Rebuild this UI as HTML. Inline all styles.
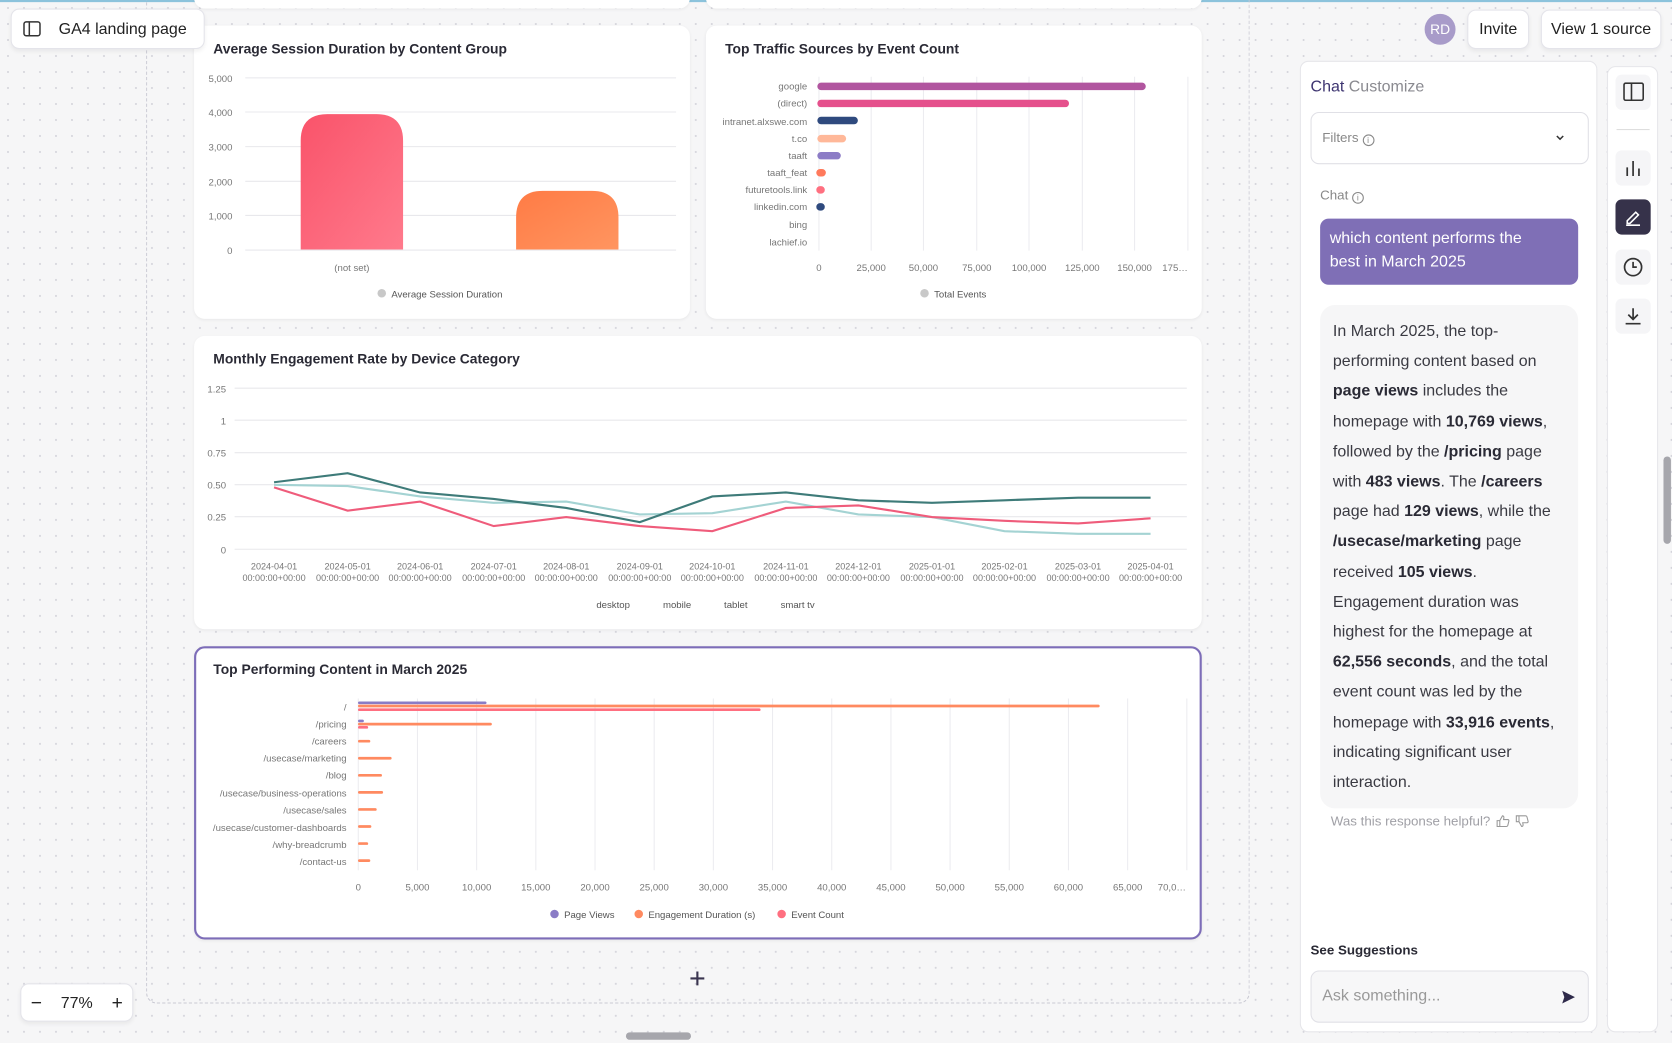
<!DOCTYPE html>
<html><head><meta charset="utf-8"><style>
*{box-sizing:border-box;margin:0;padding:0}
html,body{width:1672px;height:1043px;overflow:hidden;background:#f6f6f7;font-family:"Liberation Sans",sans-serif}
#w{position:absolute;left:0;top:0;width:1568px;height:978px;transform:scale(1.06633,1.06646);transform-origin:0 0;
background-color:#f6f6f7;background-image:radial-gradient(circle,#d3d3da 0.7px,transparent 1.1px);background-size:15px 15px;overflow:hidden}
.abs{position:absolute}
.card{position:absolute;background:#fff;border-radius:10px;box-shadow:0 1px 3px rgba(0,0,0,.06)}
.ttl{position:absolute;left:18px;top:14px;font-size:13px;font-weight:bold;color:#2a2a35}
.btn{position:absolute;background:#fff;border:1px solid #e4e4ea;border-radius:8px;box-shadow:0 2px 4px rgba(0,0,0,.06);font-size:15px;color:#222;display:flex;align-items:center;justify-content:center}
svg text{font-family:"Liberation Sans",sans-serif}
.resp b{color:#2a2a35}
</style></head><body><div id="w">
<div class="abs" style="left:0;top:0;width:1568px;height:2px;background:#8cc3dc"></div>
<div class="abs" style="left:137px;top:-10px;width:1035px;height:951px;border:1.5px dashed #c9c9d3;border-top:none;border-radius:0 0 10px 10px"></div>
<div class="card" style="left:182px;top:-20px;width:465px;height:28px"></div>
<div class="card" style="left:662px;top:-20px;width:465px;height:28px"></div>
<div class="card" style="left:182px;top:24px;width:465px;height:275px"><div class="ttl">Average Session Duration by Content Group</div></div>
<div class="card" style="left:662px;top:24px;width:465px;height:275px"><div class="ttl">Top Traffic Sources by Event Count</div></div>
<div class="card" style="left:182px;top:315px;width:945px;height:275px"><div class="ttl">Monthly Engagement Rate by Device Category</div></div>
<div class="card" style="left:182px;top:606px;width:945px;height:275px;border:2px solid #7d6db8"><div class="ttl" style="left:16px;top:12px">Top Performing Content in March 2025</div></div>

<svg class="abs" style="left:0;top:0" width="1568" height="978" font-size="9" fill="#777">
<defs>
<linearGradient id="gr" x1="0" y1="0" x2="1" y2="1"><stop offset="0" stop-color="#f9536a"/><stop offset="1" stop-color="#ff7a8c"/></linearGradient>
<linearGradient id="go" x1="0" y1="0" x2="1" y2="1"><stop offset="0" stop-color="#ff7b45"/><stop offset="1" stop-color="#ff9560"/></linearGradient>
</defs>
<g stroke="#e8e8ec" stroke-width="1">
<line x1="230" y1="73" x2="634" y2="73"/><line x1="230" y1="105" x2="634" y2="105"/><line x1="230" y1="137.5" x2="634" y2="137.5"/><line x1="230" y1="170" x2="634" y2="170"/><line x1="230" y1="202" x2="634" y2="202"/><line x1="230" y1="234.5" x2="634" y2="234.5"/></g>
<g text-anchor="end"><text x="218" y="77">5,000</text><text x="218" y="109">4,000</text><text x="218" y="141">3,000</text><text x="218" y="174">2,000</text><text x="218" y="206">1,000</text><text x="218" y="238">0</text></g>
<path d="M282 234 V132 Q282 107 307 107 H353 Q378 107 378 132 V234Z" fill="url(#gr)"/>
<path d="M484 234 V204 Q484 179 509 179 H555 Q580 179 580 204 V234Z" fill="url(#go)"/>
<text x="330" y="254" text-anchor="middle">(not set)</text>
<circle cx="358" cy="275" r="4" fill="#c8c8c8"/><text x="367" y="279" fill="#555">Average Session Duration</text>
<g stroke="#ececf0"><line x1="768" y1="72" x2="768" y2="235"/><line x1="817" y1="72" x2="817" y2="235"/><line x1="866" y1="72" x2="866" y2="235"/><line x1="916" y1="72" x2="916" y2="235"/><line x1="965" y1="72" x2="965" y2="235"/><line x1="1015" y1="72" x2="1015" y2="235"/><line x1="1064" y1="72" x2="1064" y2="235"/><line x1="1114" y1="72" x2="1114" y2="235"/></g>
<g text-anchor="end"><text x="757" y="84">google</text><text x="757" y="100">(direct)</text><text x="757" y="117">intranet.alxswe.com</text><text x="757" y="133">t.co</text><text x="757" y="149">taaft</text><text x="757" y="165">taaft_feat</text><text x="757" y="181">futuretools.link</text><text x="757" y="197">linkedin.com</text><text x="757" y="214">bing</text><text x="757" y="230">lachief.io</text></g>
<g stroke-linecap="round" stroke-width="7">
<line x1="770" y1="81" x2="1071" y2="81" stroke="#b1559f"/><line x1="770" y1="97" x2="999" y2="97" stroke="#e5508c"/><line x1="770" y1="113" x2="801" y2="113" stroke="#2f4a7e"/><line x1="770" y1="130" x2="790" y2="130" stroke="#ffb899"/><line x1="770" y1="146" x2="785" y2="146" stroke="#8c7cc6"/><line x1="769" y1="162" x2="771" y2="162" stroke="#ff7a5c"/><line x1="769" y1="178" x2="770" y2="178" stroke="#ff7080"/><line x1="769" y1="194" x2="770" y2="194" stroke="#2f4a7e"/></g>
<g text-anchor="middle"><text x="768" y="254">0</text><text x="817" y="254">25,000</text><text x="866" y="254">50,000</text><text x="916" y="254">75,000</text><text x="965" y="254">100,000</text><text x="1015" y="254">125,000</text><text x="1064" y="254">150,000</text><text x="1102" y="254">175…</text></g>
<circle cx="867" cy="275" r="4" fill="#c8c8c8"/><text x="876" y="279" fill="#555">Total Events</text>
<g stroke="#e8e8ec"><line x1="220" y1="364" x2="1113" y2="364"/><line x1="220" y1="394" x2="1113" y2="394"/><line x1="220" y1="424.5" x2="1113" y2="424.5"/><line x1="220" y1="454.5" x2="1113" y2="454.5"/><line x1="220" y1="484.5" x2="1113" y2="484.5"/><line x1="220" y1="515" x2="1113" y2="515"/></g>
<g text-anchor="end"><text x="212" y="368">1.25</text><text x="212" y="398">1</text><text x="212" y="428">0.75</text><text x="212" y="458">0.50</text><text x="212" y="488">0.25</text><text x="212" y="519">0</text></g>
<g fill="none" stroke-width="2">
<polyline stroke="#a4d3d3" points="257,454.6 326,455.8 394,465.5 463,471.5 531,470.3 600,482.4 668,481.2 737,470.3 805,482.4 874,484.8 942,498.1 1011,500.5 1079,500.5"/>
<polyline stroke="#ef5c7b" points="257,457 326,478.8 394,470.3 463,493.3 531,484.8 600,493.3 668,498.1 737,476.3 805,473.9 874,484.8 942,488.4 1011,490.8 1079,486"/>
<polyline stroke="#3e7b79" points="257,452.2 326,443.7 394,461.8 463,467.9 531,476.3 600,489.6 668,465.5 737,461.8 805,469.1 874,471.5 942,469.1 1011,466.7 1079,466.7"/>
</g>
<g text-anchor="middle" font-size="8.5">
<text x="257" y="534">2024-04-01</text><text x="257" y="545">00:00:00+00:00</text>
<text x="326" y="534">2024-05-01</text><text x="326" y="545">00:00:00+00:00</text>
<text x="394" y="534">2024-06-01</text><text x="394" y="545">00:00:00+00:00</text>
<text x="463" y="534">2024-07-01</text><text x="463" y="545">00:00:00+00:00</text>
<text x="531" y="534">2024-08-01</text><text x="531" y="545">00:00:00+00:00</text>
<text x="600" y="534">2024-09-01</text><text x="600" y="545">00:00:00+00:00</text>
<text x="668" y="534">2024-10-01</text><text x="668" y="545">00:00:00+00:00</text>
<text x="737" y="534">2024-11-01</text><text x="737" y="545">00:00:00+00:00</text>
<text x="805" y="534">2024-12-01</text><text x="805" y="545">00:00:00+00:00</text>
<text x="874" y="534">2025-01-01</text><text x="874" y="545">00:00:00+00:00</text>
<text x="942" y="534">2025-02-01</text><text x="942" y="545">00:00:00+00:00</text>
<text x="1011" y="534">2025-03-01</text><text x="1011" y="545">00:00:00+00:00</text>
<text x="1079" y="534">2025-04-01</text><text x="1079" y="545">00:00:00+00:00</text>
</g>
<g text-anchor="middle" fill="#555"><text x="575" y="570">desktop</text><text x="635" y="570">mobile</text><text x="690" y="570">tablet</text><text x="748" y="570">smart tv</text></g>
<g stroke="#ececf0"><line x1="336" y1="655" x2="336" y2="816"/><line x1="391.5" y1="655" x2="391.5" y2="816"/><line x1="447" y1="655" x2="447" y2="816"/><line x1="502.5" y1="655" x2="502.5" y2="816"/><line x1="558" y1="655" x2="558" y2="816"/><line x1="613.5" y1="655" x2="613.5" y2="816"/><line x1="669" y1="655" x2="669" y2="816"/><line x1="724.5" y1="655" x2="724.5" y2="816"/><line x1="780" y1="655" x2="780" y2="816"/><line x1="835.5" y1="655" x2="835.5" y2="816"/><line x1="891" y1="655" x2="891" y2="816"/><line x1="946.5" y1="655" x2="946.5" y2="816"/><line x1="1002" y1="655" x2="1002" y2="816"/><line x1="1057.5" y1="655" x2="1057.5" y2="816"/><line x1="1113" y1="655" x2="1113" y2="816"/></g>
<g text-anchor="end"><text x="325" y="666">/</text><text x="325" y="682">/pricing</text><text x="325" y="698">/careers</text><text x="325" y="714">/usecase/marketing</text><text x="325" y="730">/blog</text><text x="325" y="747">/usecase/business-operations</text><text x="325" y="763">/usecase/sales</text><text x="325" y="779">/usecase/customer-dashboards</text><text x="325" y="795">/why-breadcrumb</text><text x="325" y="811">/contact-us</text></g>
<g stroke-width="2.5" stroke-linecap="round">
<line x1="337" y1="659" x2="455" y2="659" stroke="#8a7cc6"/><line x1="337" y1="662" x2="1030" y2="662" stroke="#ff8a60"/><line x1="337" y1="665.5" x2="712" y2="665.5" stroke="#ff6f80"/>
<line x1="337" y1="676" x2="340" y2="676" stroke="#8a7cc6"/><line x1="337" y1="679" x2="460" y2="679" stroke="#ff8a60"/><line x1="337" y1="682" x2="344" y2="682" stroke="#ff6f80"/>
<line x1="337" y1="695" x2="346" y2="695" stroke="#ff8a60"/><line x1="337" y1="711" x2="366" y2="711" stroke="#ff8a60"/><line x1="337" y1="727" x2="357" y2="727" stroke="#ff8a60"/><line x1="337" y1="743" x2="358" y2="743" stroke="#ff8a60"/><line x1="337" y1="759" x2="352" y2="759" stroke="#ff8a60"/><line x1="337" y1="775" x2="347" y2="775" stroke="#ff8a60"/><line x1="337" y1="791" x2="344" y2="791" stroke="#ff8a60"/><line x1="337" y1="807" x2="346" y2="807" stroke="#ff8a60"/></g>
<g text-anchor="middle"><text x="336" y="835">0</text><text x="391.5" y="835">5,000</text><text x="447" y="835">10,000</text><text x="502.5" y="835">15,000</text><text x="558" y="835">20,000</text><text x="613.5" y="835">25,000</text><text x="669" y="835">30,000</text><text x="724.5" y="835">35,000</text><text x="780" y="835">40,000</text><text x="835.5" y="835">45,000</text><text x="891" y="835">50,000</text><text x="946.5" y="835">55,000</text><text x="1002" y="835">60,000</text><text x="1057.5" y="835">65,000</text><text x="1099" y="835">70,0…</text></g>
<g fill="#555"><circle cx="520" cy="857" r="4" fill="#8a7cc6"/><text x="529" y="861">Page Views</text><circle cx="599" cy="857" r="4" fill="#ff8a60"/><text x="608" y="861">Engagement Duration (s)</text><circle cx="733" cy="857" r="4" fill="#ff6f80"/><text x="742" y="861">Event Count</text></g>
<path d="M654 911v13M647.5 917.5h13" stroke="#3a3550" stroke-width="2"/>
</svg>

<div class="btn" style="left:10px;top:8px;width:182px;height:38px;justify-content:flex-start;padding-left:10px">
<svg width="18" height="16" viewBox="0 0 18 16" fill="none" stroke="#333" stroke-width="1.4"><rect x="1.5" y="1.5" width="15" height="13" rx="2"/><line x1="6.5" y1="1.5" x2="6.5" y2="14.5"/></svg>
<span style="margin-left:16px">GA4 landing page</span></div>
<div class="btn" style="left:19px;top:922px;width:106px;height:36px;justify-content:space-around;font-size:15px"><span style="font-size:18px">−</span><span>77%</span><span style="font-size:18px">+</span></div>
<div class="abs" style="left:587px;top:968px;width:61px;height:7px;border-radius:4px;background:#a6a6ac"></div>
<div class="abs" style="left:1560px;top:428px;width:7px;height:82px;border-radius:4px;background:#a6a6ac"></div>

<div class="abs" style="left:1336px;top:13px;width:29px;height:29px;border-radius:50%;background:#a89bc9;color:#fff;font-size:13px;display:flex;align-items:center;justify-content:center">RD</div>
<div class="btn" style="left:1376px;top:9px;width:58px;height:37px">Invite</div>
<div class="btn" style="left:1445px;top:9px;width:113px;height:37px">View 1 source</div>

<div class="abs" style="left:1219px;top:57px;width:279px;height:911px;background:#fff;border:1px solid #e6e6ea;border-radius:8px">
<div class="abs" style="left:9px;top:15px;font-size:15px;color:#8a8a90"><span style="color:#3d3470">Chat</span> Customize</div>
<div class="abs" style="left:9px;top:47px;width:261px;height:49px;border:1px solid #e0e0e6;border-radius:8px;font-size:12.5px;color:#888;padding:16px 10px">Filters <span style="display:inline-block;width:11px;height:11px;border:1px solid #888;border-radius:50%;font-size:8px;text-align:center;line-height:10px;vertical-align:-1px">i</span><svg style="position:absolute;right:22px;top:20px" width="8" height="6" viewBox="0 0 8 6" fill="none" stroke="#333" stroke-width="1.4"><path d="M1 1.5L4 4.5L7 1.5"/></svg></div>
<div class="abs" style="left:18px;top:118px;font-size:12.5px;color:#888">Chat <span style="display:inline-block;width:11px;height:11px;border:1px solid #888;border-radius:50%;font-size:8px;text-align:center;line-height:10px;vertical-align:-1px">i</span></div>
<div class="abs" style="left:18px;top:147px;width:242px;height:62px;background:#7f6fb6;border-radius:8px;color:#fff;font-size:15px;line-height:22px;padding:8px 30px 8px 9px">which content performs the best in March 2025</div>
<div class="abs resp" style="left:18px;top:228px;width:242px;height:472px;background:#f6f6f7;border-radius:14px;font-size:15px;line-height:28.2px;color:#3a3a42;padding:11px 12px">In March 2025, the top-performing content based on <b>page views</b> includes the homepage with <b>10,769 views</b>, followed by the <b>/pricing</b> page with <b>483 views</b>. The <b>/careers</b> page had <b>129 views</b>, while the <b>/usecase/marketing</b> page received <b>105 views</b>. Engagement duration was highest for the homepage at <b>62,556 seconds</b>, and the total event count was led by the homepage with <b>33,916 events</b>, indicating significant user interaction.</div>
<div class="abs" style="left:28px;top:705px;font-size:12.5px;color:#a0a0a6;display:flex;align-items:center;gap:5px">Was this response helpful?
<svg width="13" height="12" viewBox="0 0 13 12" fill="none" stroke="#999" stroke-width="1"><path d="M1 5.5H3.5V11H1Z M3.5 5.5L6 1C7 1 7.5 1.8 7.3 3L7 4.5H11C11.8 4.5 12.2 5.2 12 6L11 10C10.8 10.6 10.4 11 9.8 11H3.5"/></svg>
<svg width="13" height="12" viewBox="0 0 13 12" fill="none" stroke="#999" stroke-width="1" transform="scale(1,-1)"><path d="M1 5.5H3.5V11H1Z M3.5 5.5L6 1C7 1 7.5 1.8 7.3 3L7 4.5H11C11.8 4.5 12.2 5.2 12 6L11 10C10.8 10.6 10.4 11 9.8 11H3.5"/></svg></div>
<div class="abs" style="left:9px;top:826px;font-size:12.5px;font-weight:bold;color:#2a2a35">See Suggestions</div>
<div class="abs" style="left:9px;top:852px;width:261px;height:49px;border:1px solid #e0e0e6;border-radius:8px;background:#f7f7f8;font-size:15px;color:#999;padding:14px 10px">Ask something...
<svg style="position:absolute;right:11px;top:17px" width="14" height="14" viewBox="0 0 14 14"><path d="M1 1 L13 7 L1 13 L3 7Z" fill="#2e2a4a"/></svg></div>
</div>

<div class="abs" style="left:1507px;top:62px;width:48px;height:906px;background:#fff;border:1px solid #e6e6ea;border-radius:8px">
<div class="abs" style="left:7px;top:7px;width:33px;height:33px;border-radius:6px;background:#f5f5f7"><svg style="margin:7px" width="20" height="18" viewBox="0 0 20 18" fill="none" stroke="#333" stroke-width="1.5"><rect x="1" y="1" width="18" height="16" rx="1.5"/><line x1="8" y1="1" x2="8" y2="17"/></svg></div>
<div class="abs" style="left:8px;top:58px;width:31px;height:1px;background:#ddd"></div>
<div class="abs" style="left:7px;top:78px;width:33px;height:33px;border-radius:6px;background:#f5f5f7"><svg style="margin:8px" width="17" height="17" viewBox="0 0 17 17" stroke="#333" stroke-width="1.6"><line x1="3" y1="8" x2="3" y2="16"/><line x1="8.5" y1="2" x2="8.5" y2="16"/><line x1="14" y1="9" x2="14" y2="16"/></svg></div>
<div class="abs" style="left:7px;top:124px;width:33px;height:33px;border-radius:6px;background:#36324a"><svg style="margin:8px" width="17" height="17" viewBox="0 0 17 17" fill="none" stroke="#fff" stroke-width="1.5"><path d="M3 12 L11 4 L13.5 6.5 L5.5 14.5 H3Z"/><line x1="2" y1="16.2" x2="15" y2="16.2"/></svg></div>
<div class="abs" style="left:7px;top:171px;width:33px;height:33px;border-radius:6px;background:#f5f5f7"><svg style="margin:7px" width="19" height="19" viewBox="0 0 19 19" fill="none" stroke="#333" stroke-width="1.6"><circle cx="9.5" cy="9.5" r="8"/><path d="M9.5 4.5V9.5H13"/></svg></div>
<div class="abs" style="left:7px;top:217px;width:33px;height:33px;border-radius:6px;background:#f5f5f7"><svg style="margin:8px" width="17" height="17" viewBox="0 0 17 17" fill="none" stroke="#333" stroke-width="1.6"><path d="M8.5 1V11M4 7L8.5 11.5L13 7M1.5 15.5H15.5"/></svg></div>
</div>
</div></body></html>
